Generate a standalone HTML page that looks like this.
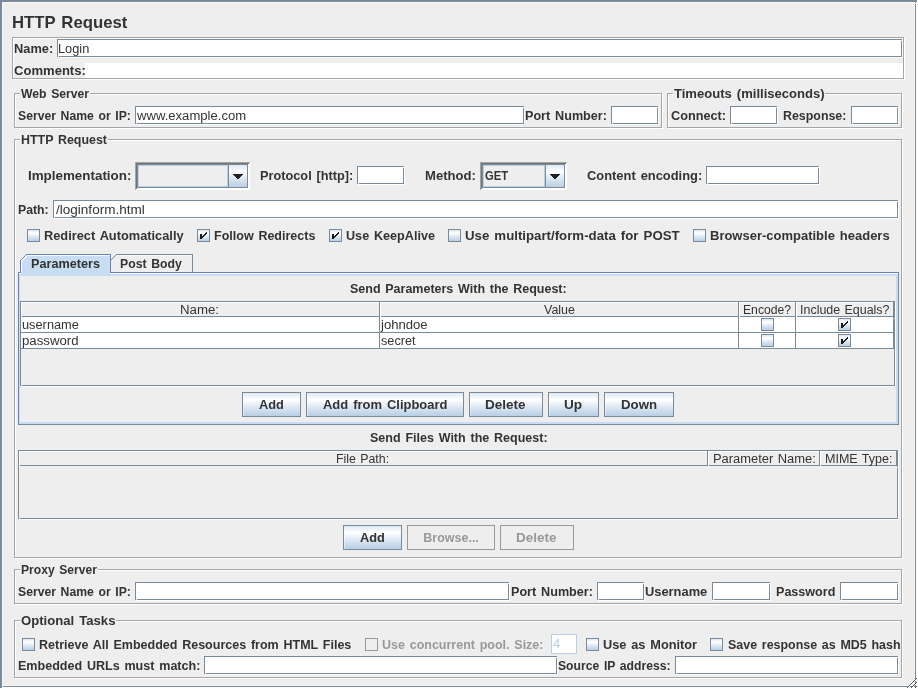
<!DOCTYPE html>
<html><head><meta charset="utf-8"><title>HTTP Request</title>
<style>
html,body{margin:0;padding:0;}
body{width:918px;height:689px;overflow:hidden;background:#EEEEEE;position:relative;font-family:"Liberation Sans",sans-serif;}
#r{position:absolute;left:0;top:0;width:918px;height:689px;overflow:hidden;background:#EEEEEE;}
#t{position:absolute;left:0;top:0;width:918px;height:689px;overflow:hidden;will-change:transform;}
#r div,#r svg,#r span{position:absolute;display:block;}
#r span{white-space:pre;line-height:20px;font-weight:bold;transform-origin:0 50%;}
</style></head><body><div id="r">
<div style="left:916px;top:0px;width:2px;height:689px;background:#FFFFFF;"></div>
<div style="left:0px;top:687px;width:918px;height:2px;background:#FFFFFF;"></div>
<div style="left:0px;top:0px;width:917px;height:2px;background:#7A8A99;"></div>
<div style="left:0px;top:0px;width:2px;height:688px;background:#7A8A99;"></div>
<div style="left:2px;top:2px;width:913px;height:1px;background:#F8F8F7;"></div>
<div style="left:2px;top:2px;width:1px;height:684px;background:#F8F8F7;"></div>
<div style="left:914px;top:3px;width:1px;height:683px;background:#F4F4F4;"></div>
<div style="left:3px;top:685px;width:912px;height:1px;background:#F4F4F4;"></div>
<div style="left:915px;top:4px;width:1px;height:683px;background:#7A8A99;"></div>
<div style="left:915px;top:2px;width:1px;height:1px;background:#7A8A99;"></div>
<div style="left:3px;top:686px;width:913px;height:1px;background:#7A8A99;"></div>
<svg style="left:905px;top:676px" width="13" height="13" viewBox="0 0 13 13" shape-rendering="crispEdges"><rect x="3" y="11" width="1" height="1" fill="#FFFFFF"/><rect x="4" y="10" width="1" height="1" fill="#FFFFFF"/><rect x="5" y="9" width="1" height="1" fill="#FFFFFF"/><rect x="6" y="8" width="1" height="1" fill="#FFFFFF"/><rect x="7" y="7" width="1" height="1" fill="#FFFFFF"/><rect x="8" y="6" width="1" height="1" fill="#FFFFFF"/><rect x="9" y="5" width="1" height="1" fill="#FFFFFF"/><rect x="10" y="4" width="1" height="1" fill="#FFFFFF"/><rect x="11" y="3" width="1" height="1" fill="#FFFFFF"/><rect x="12" y="2" width="1" height="1" fill="#FFFFFF"/><rect x="7" y="11" width="1" height="1" fill="#FFFFFF"/><rect x="8" y="10" width="1" height="1" fill="#FFFFFF"/><rect x="9" y="9" width="1" height="1" fill="#FFFFFF"/><rect x="10" y="8" width="1" height="1" fill="#FFFFFF"/><rect x="11" y="7" width="1" height="1" fill="#FFFFFF"/><rect x="12" y="6" width="1" height="1" fill="#FFFFFF"/><rect x="11" y="11" width="1" height="1" fill="#FFFFFF"/><rect x="12" y="10" width="1" height="1" fill="#FFFFFF"/><rect x="2" y="11" width="1" height="1" fill="#5A5A5A"/><rect x="3" y="10" width="1" height="1" fill="#5A5A5A"/><rect x="4" y="9" width="1" height="1" fill="#5A5A5A"/><rect x="5" y="8" width="1" height="1" fill="#5A5A5A"/><rect x="6" y="7" width="1" height="1" fill="#5A5A5A"/><rect x="7" y="6" width="1" height="1" fill="#5A5A5A"/><rect x="8" y="5" width="1" height="1" fill="#5A5A5A"/><rect x="9" y="4" width="1" height="1" fill="#5A5A5A"/><rect x="10" y="3" width="1" height="1" fill="#5A5A5A"/><rect x="11" y="2" width="1" height="1" fill="#5A5A5A"/><rect x="6" y="11" width="1" height="1" fill="#5A5A5A"/><rect x="7" y="10" width="1" height="1" fill="#5A5A5A"/><rect x="8" y="9" width="1" height="1" fill="#5A5A5A"/><rect x="9" y="8" width="1" height="1" fill="#5A5A5A"/><rect x="10" y="7" width="1" height="1" fill="#5A5A5A"/><rect x="11" y="6" width="1" height="1" fill="#5A5A5A"/><rect x="10" y="11" width="1" height="1" fill="#5A5A5A"/><rect x="11" y="10" width="1" height="1" fill="#5A5A5A"/></svg>
<div style="left:13px;top:38px;width:892px;height:1px;background:#FFFFFF;"></div>
<div style="left:13px;top:79px;width:892px;height:1px;background:#FFFFFF;"></div>
<div style="left:13px;top:38px;width:1px;height:42px;background:#FFFFFF;"></div>
<div style="left:904px;top:38px;width:1px;height:42px;background:#FFFFFF;"></div>
<div style="left:12px;top:37px;width:892px;height:1px;background:#A6A6A6;"></div>
<div style="left:12px;top:78px;width:892px;height:1px;background:#A6A6A6;"></div>
<div style="left:12px;top:37px;width:1px;height:42px;background:#A6A6A6;"></div>
<div style="left:903px;top:37px;width:1px;height:42px;background:#A6A6A6;"></div>
<div style="left:57px;top:39px;width:845px;height:18px;background:#FFFFFF;"></div>
<div style="left:58px;top:57px;width:845px;height:1px;background:#FFFFFF;"></div>
<div style="left:902px;top:40px;width:1px;height:18px;background:#FFFFFF;"></div>
<div style="left:57px;top:39px;width:845px;height:1px;background:#7A8A99;"></div>
<div style="left:57px;top:56px;width:845px;height:1px;background:#7A8A99;"></div>
<div style="left:57px;top:39px;width:1px;height:18px;background:#7A8A99;"></div>
<div style="left:901px;top:39px;width:1px;height:18px;background:#7A8A99;"></div>
<div style="left:58px;top:56px;width:1px;height:1px;background:#F2F2F2;"></div>
<div style="left:901px;top:40px;width:1px;height:1px;background:#F2F2F2;"></div>
<div style="left:85px;top:63px;width:818px;height:15px;background:#FFFFFF;"></div>
<div style="left:15px;top:94px;width:648px;height:1px;background:#FFFFFF;"></div>
<div style="left:15px;top:128px;width:648px;height:1px;background:#FFFFFF;"></div>
<div style="left:15px;top:94px;width:1px;height:35px;background:#FFFFFF;"></div>
<div style="left:662px;top:94px;width:1px;height:35px;background:#FFFFFF;"></div>
<div style="left:14px;top:93px;width:648px;height:1px;background:#A6A6A6;"></div>
<div style="left:14px;top:127px;width:648px;height:1px;background:#A6A6A6;"></div>
<div style="left:14px;top:93px;width:1px;height:35px;background:#A6A6A6;"></div>
<div style="left:661px;top:93px;width:1px;height:35px;background:#A6A6A6;"></div>
<div style="left:20px;top:93px;width:70px;height:2px;background:#EEEEEE;"></div>
<div style="left:135px;top:106px;width:389px;height:18px;background:#FFFFFF;"></div>
<div style="left:136px;top:124px;width:389px;height:1px;background:#FFFFFF;"></div>
<div style="left:524px;top:107px;width:1px;height:18px;background:#FFFFFF;"></div>
<div style="left:135px;top:106px;width:389px;height:1px;background:#7A8A99;"></div>
<div style="left:135px;top:123px;width:389px;height:1px;background:#7A8A99;"></div>
<div style="left:135px;top:106px;width:1px;height:18px;background:#7A8A99;"></div>
<div style="left:523px;top:106px;width:1px;height:18px;background:#7A8A99;"></div>
<div style="left:136px;top:123px;width:1px;height:1px;background:#F2F2F2;"></div>
<div style="left:523px;top:107px;width:1px;height:1px;background:#F2F2F2;"></div>
<div style="left:611px;top:106px;width:47px;height:18px;background:#FFFFFF;"></div>
<div style="left:612px;top:124px;width:47px;height:1px;background:#FFFFFF;"></div>
<div style="left:658px;top:107px;width:1px;height:18px;background:#FFFFFF;"></div>
<div style="left:611px;top:106px;width:47px;height:1px;background:#7A8A99;"></div>
<div style="left:611px;top:123px;width:47px;height:1px;background:#7A8A99;"></div>
<div style="left:611px;top:106px;width:1px;height:18px;background:#7A8A99;"></div>
<div style="left:657px;top:106px;width:1px;height:18px;background:#7A8A99;"></div>
<div style="left:612px;top:123px;width:1px;height:1px;background:#F2F2F2;"></div>
<div style="left:657px;top:107px;width:1px;height:1px;background:#F2F2F2;"></div>
<div style="left:668px;top:94px;width:235px;height:1px;background:#FFFFFF;"></div>
<div style="left:668px;top:128px;width:235px;height:1px;background:#FFFFFF;"></div>
<div style="left:668px;top:94px;width:1px;height:35px;background:#FFFFFF;"></div>
<div style="left:902px;top:94px;width:1px;height:35px;background:#FFFFFF;"></div>
<div style="left:667px;top:93px;width:235px;height:1px;background:#A6A6A6;"></div>
<div style="left:667px;top:127px;width:235px;height:1px;background:#A6A6A6;"></div>
<div style="left:667px;top:93px;width:1px;height:35px;background:#A6A6A6;"></div>
<div style="left:901px;top:93px;width:1px;height:35px;background:#A6A6A6;"></div>
<div style="left:673px;top:93px;width:152px;height:2px;background:#EEEEEE;"></div>
<div style="left:730px;top:106px;width:47px;height:18px;background:#FFFFFF;"></div>
<div style="left:731px;top:124px;width:47px;height:1px;background:#FFFFFF;"></div>
<div style="left:777px;top:107px;width:1px;height:18px;background:#FFFFFF;"></div>
<div style="left:730px;top:106px;width:47px;height:1px;background:#7A8A99;"></div>
<div style="left:730px;top:123px;width:47px;height:1px;background:#7A8A99;"></div>
<div style="left:730px;top:106px;width:1px;height:18px;background:#7A8A99;"></div>
<div style="left:776px;top:106px;width:1px;height:18px;background:#7A8A99;"></div>
<div style="left:731px;top:123px;width:1px;height:1px;background:#F2F2F2;"></div>
<div style="left:776px;top:107px;width:1px;height:1px;background:#F2F2F2;"></div>
<div style="left:851px;top:106px;width:47px;height:18px;background:#FFFFFF;"></div>
<div style="left:852px;top:124px;width:47px;height:1px;background:#FFFFFF;"></div>
<div style="left:898px;top:107px;width:1px;height:18px;background:#FFFFFF;"></div>
<div style="left:851px;top:106px;width:47px;height:1px;background:#7A8A99;"></div>
<div style="left:851px;top:123px;width:47px;height:1px;background:#7A8A99;"></div>
<div style="left:851px;top:106px;width:1px;height:18px;background:#7A8A99;"></div>
<div style="left:897px;top:106px;width:1px;height:18px;background:#7A8A99;"></div>
<div style="left:852px;top:123px;width:1px;height:1px;background:#F2F2F2;"></div>
<div style="left:897px;top:107px;width:1px;height:1px;background:#F2F2F2;"></div>
<div style="left:15px;top:140px;width:888px;height:1px;background:#FFFFFF;"></div>
<div style="left:15px;top:558px;width:888px;height:1px;background:#FFFFFF;"></div>
<div style="left:15px;top:140px;width:1px;height:419px;background:#FFFFFF;"></div>
<div style="left:902px;top:140px;width:1px;height:419px;background:#FFFFFF;"></div>
<div style="left:14px;top:139px;width:888px;height:1px;background:#A6A6A6;"></div>
<div style="left:14px;top:557px;width:888px;height:1px;background:#A6A6A6;"></div>
<div style="left:14px;top:139px;width:1px;height:419px;background:#A6A6A6;"></div>
<div style="left:901px;top:139px;width:1px;height:419px;background:#A6A6A6;"></div>
<div style="left:20px;top:139px;width:88px;height:2px;background:#EEEEEE;"></div>
<div style="left:135px;top:162px;width:115px;height:28px;background:#EEEEEE;"></div>
<div style="left:136px;top:189px;width:114px;height:1px;background:#FFFFFF;"></div>
<div style="left:249px;top:163px;width:1px;height:26px;background:#FFFFFF;"></div>
<div style="left:137px;top:188px;width:112px;height:1px;background:#FFFFFF;"></div>
<div style="left:248px;top:164px;width:1px;height:24px;background:#FFFFFF;"></div>
<div style="left:135px;top:162px;width:1px;height:28px;background:#A6A6A6;"></div>
<div style="left:136px;top:162px;width:114px;height:1px;background:#A6A6A6;"></div>
<div style="left:136px;top:163px;width:1px;height:26px;background:#747474;"></div>
<div style="left:137px;top:163px;width:112px;height:1px;background:#747474;"></div>
<div style="left:137px;top:164px;width:111px;height:1px;background:#7A8A99;"></div>
<div style="left:137px;top:187px;width:111px;height:1px;background:#7A8A99;"></div>
<div style="left:137px;top:164px;width:1px;height:24px;background:#7A8A99;"></div>
<div style="left:247px;top:164px;width:1px;height:24px;background:#7A8A99;"></div>
<div style="left:138px;top:165px;width:90px;height:1px;background:#B8CFE5;"></div>
<div style="left:138px;top:186px;width:90px;height:1px;background:#B8CFE5;"></div>
<div style="left:138px;top:165px;width:1px;height:22px;background:#B8CFE5;"></div>
<div style="left:227px;top:165px;width:1px;height:22px;background:#B8CFE5;"></div>
<div style="left:228px;top:164px;width:20px;height:24px;background:linear-gradient(#DDE8F3 0%,#FFFFFF 30%,#DDE8F3 60%,#B8CFE5 100%);box-sizing:border-box;border:1px solid #7A8A99;"></div>
<svg style="left:233px;top:174px" width="10" height="5" viewBox="0 0 10 5" shape-rendering="crispEdges"><path fill="#222" d="M0 0h10v1h-10zM1 1h8v1h-8zM2 2h6v1h-6zM3 3h4v1h-4zM4 4h2v1h-2z"/></svg>
<div style="left:357px;top:166px;width:47px;height:18px;background:#FFFFFF;"></div>
<div style="left:358px;top:184px;width:47px;height:1px;background:#FFFFFF;"></div>
<div style="left:404px;top:167px;width:1px;height:18px;background:#FFFFFF;"></div>
<div style="left:357px;top:166px;width:47px;height:1px;background:#7A8A99;"></div>
<div style="left:357px;top:183px;width:47px;height:1px;background:#7A8A99;"></div>
<div style="left:357px;top:166px;width:1px;height:18px;background:#7A8A99;"></div>
<div style="left:403px;top:166px;width:1px;height:18px;background:#7A8A99;"></div>
<div style="left:358px;top:183px;width:1px;height:1px;background:#F2F2F2;"></div>
<div style="left:403px;top:167px;width:1px;height:1px;background:#F2F2F2;"></div>
<div style="left:480px;top:162px;width:87px;height:28px;background:#EEEEEE;"></div>
<div style="left:481px;top:189px;width:86px;height:1px;background:#FFFFFF;"></div>
<div style="left:566px;top:163px;width:1px;height:26px;background:#FFFFFF;"></div>
<div style="left:482px;top:188px;width:84px;height:1px;background:#FFFFFF;"></div>
<div style="left:565px;top:164px;width:1px;height:24px;background:#FFFFFF;"></div>
<div style="left:480px;top:162px;width:1px;height:28px;background:#A6A6A6;"></div>
<div style="left:481px;top:162px;width:86px;height:1px;background:#A6A6A6;"></div>
<div style="left:481px;top:163px;width:1px;height:26px;background:#747474;"></div>
<div style="left:482px;top:163px;width:84px;height:1px;background:#747474;"></div>
<div style="left:482px;top:164px;width:83px;height:1px;background:#7A8A99;"></div>
<div style="left:482px;top:187px;width:83px;height:1px;background:#7A8A99;"></div>
<div style="left:482px;top:164px;width:1px;height:24px;background:#7A8A99;"></div>
<div style="left:564px;top:164px;width:1px;height:24px;background:#7A8A99;"></div>
<div style="left:483px;top:165px;width:62px;height:1px;background:#B8CFE5;"></div>
<div style="left:483px;top:186px;width:62px;height:1px;background:#B8CFE5;"></div>
<div style="left:483px;top:165px;width:1px;height:22px;background:#B8CFE5;"></div>
<div style="left:544px;top:165px;width:1px;height:22px;background:#B8CFE5;"></div>
<div style="left:545px;top:164px;width:20px;height:24px;background:linear-gradient(#DDE8F3 0%,#FFFFFF 30%,#DDE8F3 60%,#B8CFE5 100%);box-sizing:border-box;border:1px solid #7A8A99;"></div>
<svg style="left:550px;top:174px" width="10" height="5" viewBox="0 0 10 5" shape-rendering="crispEdges"><path fill="#222" d="M0 0h10v1h-10zM1 1h8v1h-8zM2 2h6v1h-6zM3 3h4v1h-4zM4 4h2v1h-2z"/></svg>
<div style="left:706px;top:166px;width:113px;height:18px;background:#FFFFFF;"></div>
<div style="left:707px;top:184px;width:113px;height:1px;background:#FFFFFF;"></div>
<div style="left:819px;top:167px;width:1px;height:18px;background:#FFFFFF;"></div>
<div style="left:706px;top:166px;width:113px;height:1px;background:#7A8A99;"></div>
<div style="left:706px;top:183px;width:113px;height:1px;background:#7A8A99;"></div>
<div style="left:706px;top:166px;width:1px;height:18px;background:#7A8A99;"></div>
<div style="left:818px;top:166px;width:1px;height:18px;background:#7A8A99;"></div>
<div style="left:707px;top:183px;width:1px;height:1px;background:#F2F2F2;"></div>
<div style="left:818px;top:167px;width:1px;height:1px;background:#F2F2F2;"></div>
<div style="left:53px;top:200px;width:845px;height:18px;background:#FFFFFF;"></div>
<div style="left:54px;top:218px;width:845px;height:1px;background:#FFFFFF;"></div>
<div style="left:898px;top:201px;width:1px;height:18px;background:#FFFFFF;"></div>
<div style="left:53px;top:200px;width:845px;height:1px;background:#7A8A99;"></div>
<div style="left:53px;top:217px;width:845px;height:1px;background:#7A8A99;"></div>
<div style="left:53px;top:200px;width:1px;height:18px;background:#7A8A99;"></div>
<div style="left:897px;top:200px;width:1px;height:18px;background:#7A8A99;"></div>
<div style="left:54px;top:217px;width:1px;height:1px;background:#F2F2F2;"></div>
<div style="left:897px;top:201px;width:1px;height:1px;background:#F2F2F2;"></div>
<div style="left:27px;top:229px;width:13px;height:13px;background:linear-gradient(#DDE8F3 0%,#FFFFFF 30%,#DDE8F3 60%,#B8CFE5 100%);box-sizing:border-box;border:1px solid #7A8A99;"></div>
<div style="left:197px;top:229px;width:13px;height:13px;background:linear-gradient(#DDE8F3 0%,#FFFFFF 30%,#DDE8F3 60%,#B8CFE5 100%);box-sizing:border-box;border:1px solid #7A8A99;"></div>
<svg style="left:197px;top:229px" width="13" height="13" viewBox="0 0 13 13" shape-rendering="crispEdges"><path fill="#1a1a1a" d="M3 5h2v5h-2z"/><path fill="#1a1a1a" d="M9 3h1v2h-1zM8 4h1v2h-1zM7 5h1v2h-1zM6 6h1v2h-1zM5 7h1v2h-1z"/></svg>
<div style="left:329px;top:229px;width:13px;height:13px;background:linear-gradient(#DDE8F3 0%,#FFFFFF 30%,#DDE8F3 60%,#B8CFE5 100%);box-sizing:border-box;border:1px solid #7A8A99;"></div>
<svg style="left:329px;top:229px" width="13" height="13" viewBox="0 0 13 13" shape-rendering="crispEdges"><path fill="#1a1a1a" d="M3 5h2v5h-2z"/><path fill="#1a1a1a" d="M9 3h1v2h-1zM8 4h1v2h-1zM7 5h1v2h-1zM6 6h1v2h-1zM5 7h1v2h-1z"/></svg>
<div style="left:448px;top:229px;width:13px;height:13px;background:linear-gradient(#DDE8F3 0%,#FFFFFF 30%,#DDE8F3 60%,#B8CFE5 100%);box-sizing:border-box;border:1px solid #7A8A99;"></div>
<div style="left:693px;top:229px;width:13px;height:13px;background:linear-gradient(#DDE8F3 0%,#FFFFFF 30%,#DDE8F3 60%,#B8CFE5 100%);box-sizing:border-box;border:1px solid #7A8A99;"></div>
<div style="left:18px;top:272px;width:1px;height:153px;background:#6382BF;"></div>
<div style="left:19px;top:273px;width:1px;height:151px;background:#C8DDF2;"></div>
<div style="left:18px;top:272px;width:881px;height:1px;background:#6382BF;"></div>
<div style="left:19px;top:273px;width:879px;height:1px;background:#FFFFFF;"></div>
<div style="left:19px;top:274px;width:879px;height:2px;background:#C8DDF2;"></div>
<div style="left:898px;top:273px;width:1px;height:152px;background:#7A8A99;"></div>
<div style="left:896px;top:274px;width:2px;height:150px;background:#C8DDF2;"></div>
<div style="left:18px;top:424px;width:881px;height:1px;background:#7A8A99;"></div>
<div style="left:19px;top:422px;width:879px;height:2px;background:#C8DDF2;"></div>
<svg style="left:20px;top:254px" width="175" height="22" viewBox="0 0 175 22" shape-rendering="crispEdges"><path d="M1 22V7L7 1H90V22z" fill="#C8DDF2"/><rect x="1" y="7" width="1" height="12" fill="#FFFFFF"/><rect x="7" y="1" width="83" height="1" fill="#FFFFFF"/><rect x="2" y="6" width="1" height="1" fill="#FFFFFF"/><rect x="3" y="5" width="1" height="1" fill="#FFFFFF"/><rect x="4" y="4" width="1" height="1" fill="#FFFFFF"/><rect x="5" y="3" width="1" height="1" fill="#FFFFFF"/><rect x="6" y="2" width="1" height="1" fill="#FFFFFF"/><rect x="0" y="6" width="1" height="13" fill="#6382BF"/><rect x="1" y="5" width="1" height="1" fill="#6382BF"/><rect x="2" y="4" width="1" height="1" fill="#6382BF"/><rect x="3" y="3" width="1" height="1" fill="#6382BF"/><rect x="4" y="2" width="1" height="1" fill="#6382BF"/><rect x="5" y="1" width="1" height="1" fill="#6382BF"/><rect x="6" y="0" width="85" height="1" fill="#6382BF"/><rect x="90" y="0" width="1" height="19" fill="#6382BF"/><rect x="1" y="18" width="89" height="4" fill="#C8DDF2"/><rect x="91" y="5" width="1" height="1" fill="#7A8A99"/><rect x="92" y="4" width="1" height="1" fill="#7A8A99"/><rect x="93" y="3" width="1" height="1" fill="#7A8A99"/><rect x="94" y="2" width="1" height="1" fill="#7A8A99"/><rect x="95" y="1" width="1" height="1" fill="#7A8A99"/><rect x="96" y="0" width="77" height="1" fill="#7A8A99"/><rect x="172" y="0" width="1" height="18" fill="#7A8A99"/><rect x="97" y="1" width="75" height="1" fill="#F8F8F8"/></svg>
<div style="left:895px;top:302px;width:1px;height:85px;background:#FFFFFF;"></div>
<div style="left:21px;top:386px;width:875px;height:1px;background:#FFFFFF;"></div>
<div style="left:20px;top:301px;width:875px;height:1px;background:#7A8A99;"></div>
<div style="left:20px;top:385px;width:875px;height:1px;background:#7A8A99;"></div>
<div style="left:20px;top:301px;width:1px;height:85px;background:#7A8A99;"></div>
<div style="left:894px;top:301px;width:1px;height:85px;background:#7A8A99;"></div>
<div style="left:21px;top:385px;width:1px;height:1px;background:#EEEEEE;"></div>
<div style="left:894px;top:318px;width:1px;height:1px;background:#EEEEEE;"></div>
<div style="left:21px;top:317px;width:873px;height:32px;background:#FFFFFF;"></div>
<div style="left:21px;top:302px;width:873px;height:1px;background:#FFFFFF;"></div>
<div style="left:22px;top:316px;width:872px;height:1px;background:#7A8A99;"></div>
<div style="left:21px;top:332px;width:873px;height:1px;background:#7A8A99;"></div>
<div style="left:21px;top:348px;width:873px;height:1px;background:#7A8A99;"></div>
<div style="left:379px;top:302px;width:1px;height:47px;background:#7A8A99;"></div>
<div style="left:738px;top:302px;width:1px;height:47px;background:#7A8A99;"></div>
<div style="left:795px;top:302px;width:1px;height:47px;background:#7A8A99;"></div>
<div style="left:21px;top:302px;width:1px;height:15px;background:#FFFFFF;"></div>
<div style="left:380px;top:302px;width:1px;height:15px;background:#FFFFFF;"></div>
<div style="left:739px;top:302px;width:1px;height:15px;background:#FFFFFF;"></div>
<div style="left:796px;top:302px;width:1px;height:15px;background:#FFFFFF;"></div>
<div style="left:893px;top:302px;width:1px;height:47px;background:#7A8A99;"></div>
<div style="left:761px;top:318px;width:13px;height:13px;background:linear-gradient(#DDE8F3 0%,#FFFFFF 30%,#DDE8F3 60%,#B8CFE5 100%);box-sizing:border-box;border:1px solid #7A8A99;"></div>
<div style="left:838px;top:318px;width:13px;height:13px;background:linear-gradient(#DDE8F3 0%,#FFFFFF 30%,#DDE8F3 60%,#B8CFE5 100%);box-sizing:border-box;border:1px solid #7A8A99;"></div>
<svg style="left:838px;top:318px" width="13" height="13" viewBox="0 0 13 13" shape-rendering="crispEdges"><path fill="#1a1a1a" d="M3 5h2v5h-2z"/><path fill="#1a1a1a" d="M9 3h1v2h-1zM8 4h1v2h-1zM7 5h1v2h-1zM6 6h1v2h-1zM5 7h1v2h-1z"/></svg>
<div style="left:761px;top:334px;width:13px;height:13px;background:linear-gradient(#DDE8F3 0%,#FFFFFF 30%,#DDE8F3 60%,#B8CFE5 100%);box-sizing:border-box;border:1px solid #7A8A99;"></div>
<div style="left:838px;top:334px;width:13px;height:13px;background:linear-gradient(#DDE8F3 0%,#FFFFFF 30%,#DDE8F3 60%,#B8CFE5 100%);box-sizing:border-box;border:1px solid #7A8A99;"></div>
<svg style="left:838px;top:334px" width="13" height="13" viewBox="0 0 13 13" shape-rendering="crispEdges"><path fill="#1a1a1a" d="M3 5h2v5h-2z"/><path fill="#1a1a1a" d="M9 3h1v2h-1zM8 4h1v2h-1zM7 5h1v2h-1zM6 6h1v2h-1zM5 7h1v2h-1z"/></svg>
<div style="left:242px;top:392px;width:59px;height:25px;background:linear-gradient(#DDE8F3 0%,#FFFFFF 30%,#DDE8F3 60%,#B8CFE5 100%);box-sizing:border-box;border:1px solid #7A8A99;"></div>
<div style="left:243px;top:393px;width:1px;height:23px;background:rgba(255,255,255,0.4);"></div>
<div style="left:306px;top:392px;width:158px;height:25px;background:linear-gradient(#DDE8F3 0%,#FFFFFF 30%,#DDE8F3 60%,#B8CFE5 100%);box-sizing:border-box;border:1px solid #7A8A99;"></div>
<div style="left:307px;top:393px;width:1px;height:23px;background:rgba(255,255,255,0.4);"></div>
<div style="left:469px;top:392px;width:74px;height:25px;background:linear-gradient(#DDE8F3 0%,#FFFFFF 30%,#DDE8F3 60%,#B8CFE5 100%);box-sizing:border-box;border:1px solid #7A8A99;"></div>
<div style="left:470px;top:393px;width:1px;height:23px;background:rgba(255,255,255,0.4);"></div>
<div style="left:548px;top:392px;width:51px;height:25px;background:linear-gradient(#DDE8F3 0%,#FFFFFF 30%,#DDE8F3 60%,#B8CFE5 100%);box-sizing:border-box;border:1px solid #7A8A99;"></div>
<div style="left:549px;top:393px;width:1px;height:23px;background:rgba(255,255,255,0.4);"></div>
<div style="left:604px;top:392px;width:70px;height:25px;background:linear-gradient(#DDE8F3 0%,#FFFFFF 30%,#DDE8F3 60%,#B8CFE5 100%);box-sizing:border-box;border:1px solid #7A8A99;"></div>
<div style="left:605px;top:393px;width:1px;height:23px;background:rgba(255,255,255,0.4);"></div>
<div style="left:898px;top:451px;width:1px;height:69px;background:#FFFFFF;"></div>
<div style="left:19px;top:519px;width:880px;height:1px;background:#FFFFFF;"></div>
<div style="left:18px;top:450px;width:880px;height:1px;background:#7A8A99;"></div>
<div style="left:18px;top:518px;width:880px;height:1px;background:#7A8A99;"></div>
<div style="left:18px;top:450px;width:1px;height:69px;background:#7A8A99;"></div>
<div style="left:897px;top:450px;width:1px;height:69px;background:#7A8A99;"></div>
<div style="left:19px;top:518px;width:1px;height:1px;background:#EEEEEE;"></div>
<div style="left:897px;top:467px;width:1px;height:1px;background:#EEEEEE;"></div>
<div style="left:19px;top:451px;width:878px;height:1px;background:#FFFFFF;"></div>
<div style="left:20px;top:465px;width:877px;height:1px;background:#7A8A99;"></div>
<div style="left:707px;top:451px;width:1px;height:15px;background:#7A8A99;"></div>
<div style="left:819px;top:451px;width:1px;height:15px;background:#7A8A99;"></div>
<div style="left:896px;top:451px;width:1px;height:15px;background:#7A8A99;"></div>
<div style="left:19px;top:451px;width:1px;height:15px;background:#FFFFFF;"></div>
<div style="left:708px;top:451px;width:1px;height:15px;background:#FFFFFF;"></div>
<div style="left:820px;top:451px;width:1px;height:15px;background:#FFFFFF;"></div>
<div style="left:343px;top:525px;width:59px;height:25px;background:linear-gradient(#DDE8F3 0%,#FFFFFF 30%,#DDE8F3 60%,#B8CFE5 100%);box-sizing:border-box;border:1px solid #7A8A99;"></div>
<div style="left:344px;top:526px;width:1px;height:23px;background:rgba(255,255,255,0.4);"></div>
<div style="left:407px;top:525px;width:88px;height:25px;background:#EEEEEE;box-sizing:border-box;border:1px solid #999999;"></div>
<div style="left:500px;top:525px;width:74px;height:25px;background:#EEEEEE;box-sizing:border-box;border:1px solid #999999;"></div>
<div style="left:15px;top:570px;width:888px;height:1px;background:#FFFFFF;"></div>
<div style="left:15px;top:604px;width:888px;height:1px;background:#FFFFFF;"></div>
<div style="left:15px;top:570px;width:1px;height:35px;background:#FFFFFF;"></div>
<div style="left:902px;top:570px;width:1px;height:35px;background:#FFFFFF;"></div>
<div style="left:14px;top:569px;width:888px;height:1px;background:#A6A6A6;"></div>
<div style="left:14px;top:603px;width:888px;height:1px;background:#A6A6A6;"></div>
<div style="left:14px;top:569px;width:1px;height:35px;background:#A6A6A6;"></div>
<div style="left:901px;top:569px;width:1px;height:35px;background:#A6A6A6;"></div>
<div style="left:20px;top:569px;width:78px;height:2px;background:#EEEEEE;"></div>
<div style="left:135px;top:582px;width:374px;height:18px;background:#FFFFFF;"></div>
<div style="left:136px;top:600px;width:374px;height:1px;background:#FFFFFF;"></div>
<div style="left:509px;top:583px;width:1px;height:18px;background:#FFFFFF;"></div>
<div style="left:135px;top:582px;width:374px;height:1px;background:#7A8A99;"></div>
<div style="left:135px;top:599px;width:374px;height:1px;background:#7A8A99;"></div>
<div style="left:135px;top:582px;width:1px;height:18px;background:#7A8A99;"></div>
<div style="left:508px;top:582px;width:1px;height:18px;background:#7A8A99;"></div>
<div style="left:136px;top:599px;width:1px;height:1px;background:#F2F2F2;"></div>
<div style="left:508px;top:583px;width:1px;height:1px;background:#F2F2F2;"></div>
<div style="left:597px;top:582px;width:47px;height:18px;background:#FFFFFF;"></div>
<div style="left:598px;top:600px;width:47px;height:1px;background:#FFFFFF;"></div>
<div style="left:644px;top:583px;width:1px;height:18px;background:#FFFFFF;"></div>
<div style="left:597px;top:582px;width:47px;height:1px;background:#7A8A99;"></div>
<div style="left:597px;top:599px;width:47px;height:1px;background:#7A8A99;"></div>
<div style="left:597px;top:582px;width:1px;height:18px;background:#7A8A99;"></div>
<div style="left:643px;top:582px;width:1px;height:18px;background:#7A8A99;"></div>
<div style="left:598px;top:599px;width:1px;height:1px;background:#F2F2F2;"></div>
<div style="left:643px;top:583px;width:1px;height:1px;background:#F2F2F2;"></div>
<div style="left:712px;top:582px;width:58px;height:18px;background:#FFFFFF;"></div>
<div style="left:713px;top:600px;width:58px;height:1px;background:#FFFFFF;"></div>
<div style="left:770px;top:583px;width:1px;height:18px;background:#FFFFFF;"></div>
<div style="left:712px;top:582px;width:58px;height:1px;background:#7A8A99;"></div>
<div style="left:712px;top:599px;width:58px;height:1px;background:#7A8A99;"></div>
<div style="left:712px;top:582px;width:1px;height:18px;background:#7A8A99;"></div>
<div style="left:769px;top:582px;width:1px;height:18px;background:#7A8A99;"></div>
<div style="left:713px;top:599px;width:1px;height:1px;background:#F2F2F2;"></div>
<div style="left:769px;top:583px;width:1px;height:1px;background:#F2F2F2;"></div>
<div style="left:840px;top:582px;width:58px;height:18px;background:#FFFFFF;"></div>
<div style="left:841px;top:600px;width:58px;height:1px;background:#FFFFFF;"></div>
<div style="left:898px;top:583px;width:1px;height:18px;background:#FFFFFF;"></div>
<div style="left:840px;top:582px;width:58px;height:1px;background:#7A8A99;"></div>
<div style="left:840px;top:599px;width:58px;height:1px;background:#7A8A99;"></div>
<div style="left:840px;top:582px;width:1px;height:18px;background:#7A8A99;"></div>
<div style="left:897px;top:582px;width:1px;height:18px;background:#7A8A99;"></div>
<div style="left:841px;top:599px;width:1px;height:1px;background:#F2F2F2;"></div>
<div style="left:897px;top:583px;width:1px;height:1px;background:#F2F2F2;"></div>
<div style="left:15px;top:621px;width:888px;height:1px;background:#FFFFFF;"></div>
<div style="left:15px;top:678px;width:888px;height:1px;background:#FFFFFF;"></div>
<div style="left:15px;top:621px;width:1px;height:58px;background:#FFFFFF;"></div>
<div style="left:902px;top:621px;width:1px;height:58px;background:#FFFFFF;"></div>
<div style="left:14px;top:620px;width:888px;height:1px;background:#A6A6A6;"></div>
<div style="left:14px;top:677px;width:888px;height:1px;background:#A6A6A6;"></div>
<div style="left:14px;top:620px;width:1px;height:58px;background:#A6A6A6;"></div>
<div style="left:901px;top:620px;width:1px;height:58px;background:#A6A6A6;"></div>
<div style="left:20px;top:620px;width:96px;height:2px;background:#EEEEEE;"></div>
<div style="left:22px;top:638px;width:13px;height:13px;background:linear-gradient(#DDE8F3 0%,#FFFFFF 30%,#DDE8F3 60%,#B8CFE5 100%);box-sizing:border-box;border:1px solid #7A8A99;"></div>
<div style="left:365px;top:638px;width:13px;height:13px;background:#EEEEEE;box-sizing:border-box;border:1px solid #999999;"></div>
<div style="left:551px;top:634px;width:26px;height:20px;background:#FFFFFF;box-sizing:border-box;border:1px solid #B8CFE5;"></div>
<div style="left:586px;top:638px;width:13px;height:13px;background:linear-gradient(#DDE8F3 0%,#FFFFFF 30%,#DDE8F3 60%,#B8CFE5 100%);box-sizing:border-box;border:1px solid #7A8A99;"></div>
<div style="left:710px;top:638px;width:13px;height:13px;background:linear-gradient(#DDE8F3 0%,#FFFFFF 30%,#DDE8F3 60%,#B8CFE5 100%);box-sizing:border-box;border:1px solid #7A8A99;"></div>
<div style="left:204px;top:656px;width:353px;height:18px;background:#FFFFFF;"></div>
<div style="left:205px;top:674px;width:353px;height:1px;background:#FFFFFF;"></div>
<div style="left:557px;top:657px;width:1px;height:18px;background:#FFFFFF;"></div>
<div style="left:204px;top:656px;width:353px;height:1px;background:#7A8A99;"></div>
<div style="left:204px;top:673px;width:353px;height:1px;background:#7A8A99;"></div>
<div style="left:204px;top:656px;width:1px;height:18px;background:#7A8A99;"></div>
<div style="left:556px;top:656px;width:1px;height:18px;background:#7A8A99;"></div>
<div style="left:205px;top:673px;width:1px;height:1px;background:#F2F2F2;"></div>
<div style="left:556px;top:657px;width:1px;height:1px;background:#F2F2F2;"></div>
<div style="left:675px;top:656px;width:223px;height:18px;background:#FFFFFF;"></div>
<div style="left:676px;top:674px;width:223px;height:1px;background:#FFFFFF;"></div>
<div style="left:898px;top:657px;width:1px;height:18px;background:#FFFFFF;"></div>
<div style="left:675px;top:656px;width:223px;height:1px;background:#7A8A99;"></div>
<div style="left:675px;top:673px;width:223px;height:1px;background:#7A8A99;"></div>
<div style="left:675px;top:656px;width:1px;height:18px;background:#7A8A99;"></div>
<div style="left:897px;top:656px;width:1px;height:18px;background:#7A8A99;"></div>
<div style="left:676px;top:673px;width:1px;height:1px;background:#F2F2F2;"></div>
<div style="left:897px;top:657px;width:1px;height:1px;background:#F2F2F2;"></div>
<div id="t">
<span style="left:12.17px;top:12.00px;font-size:16.3px;word-spacing:1.3px;color:#333333;transform:scaleX(1.0270)">HTTP Request</span>
<span style="left:13.98px;top:39.00px;font-size:12.5px;color:#333333;transform:scaleX(1.0248)">Name:</span>
<span style="left:58.38px;top:39.00px;font-size:12.5px;font-weight:normal;color:#333333;transform:scaleX(1.0226)">Login</span>
<span style="left:14.23px;top:61.00px;font-size:12.5px;color:#333333;transform:scaleX(1.0448)">Comments:</span>
<span style="left:21.00px;top:84.00px;font-size:12.5px;word-spacing:1.3px;color:#333333;transform:scaleX(0.9749)">Web Server</span>
<span style="left:17.91px;top:106.00px;font-size:12.5px;word-spacing:1.3px;color:#333333;transform:scaleX(0.9754)">Server Name or IP:</span>
<span style="left:137.10px;top:106.00px;font-size:12.5px;font-weight:normal;color:#333333;transform:scaleX(1.0473)">www.example.com</span>
<span style="left:524.74px;top:106.00px;font-size:12.5px;word-spacing:1.3px;color:#333333;transform:scaleX(1.0095)">Port Number:</span>
<span style="left:674.04px;top:84.00px;font-size:12.5px;word-spacing:1.3px;color:#333333;transform:scaleX(1.0450)">Timeouts (milliseconds)</span>
<span style="left:670.79px;top:106.00px;font-size:12.5px;color:#333333;transform:scaleX(1.0171)">Connect:</span>
<span style="left:782.96px;top:106.00px;font-size:12.5px;color:#333333;transform:scaleX(0.9919)">Response:</span>
<span style="left:21.25px;top:130.00px;font-size:12.5px;word-spacing:1.3px;color:#333333;transform:scaleX(0.9942)">HTTP Request</span>
<span style="left:27.60px;top:166.00px;font-size:12.5px;color:#333333;transform:scaleX(1.0709)">Implementation:</span>
<span style="left:259.74px;top:166.00px;font-size:12.5px;word-spacing:1.3px;color:#333333;transform:scaleX(1.0196)">Protocol [http]:</span>
<span style="left:425.01px;top:166.00px;font-size:12.5px;color:#333333;transform:scaleX(1.0481)">Method:</span>
<span style="left:485.15px;top:166.00px;font-size:12.5px;color:#333333;transform:scaleX(0.8960)">GET</span>
<span style="left:586.98px;top:166.00px;font-size:12.5px;word-spacing:1.3px;color:#333333;transform:scaleX(1.0318)">Content encoding:</span>
<span style="left:18.01px;top:200.00px;font-size:12.5px;color:#333333;transform:scaleX(0.9829)">Path:</span>
<span style="left:55.70px;top:200.00px;font-size:12.5px;font-weight:normal;color:#333333;transform:scaleX(1.0831)">/loginform.html</span>
<span style="left:44.03px;top:226.00px;font-size:12.5px;word-spacing:1.3px;color:#333333;transform:scaleX(1.0240)">Redirect Automatically</span>
<span style="left:214.05px;top:226.00px;font-size:12.5px;word-spacing:1.3px;color:#333333;transform:scaleX(1.0000)">Follow Redirects</span>
<span style="left:345.84px;top:226.00px;font-size:12.5px;word-spacing:1.3px;color:#333333;transform:scaleX(1.0092)">Use KeepAlive</span>
<span style="left:464.81px;top:226.00px;font-size:12.5px;word-spacing:1.3px;color:#333333;transform:scaleX(1.0596)">Use multipart/form-data for POST</span>
<span style="left:709.82px;top:226.00px;font-size:12.5px;word-spacing:1.3px;color:#333333;transform:scaleX(1.0391)">Browser-compatible headers</span>
<span style="left:30.84px;top:254.00px;font-size:12.5px;color:#333333;transform:scaleX(1.0127)">Parameters</span>
<span style="left:120.07px;top:254.00px;font-size:12.5px;word-spacing:1.3px;color:#333333;transform:scaleX(0.9799)">Post Body</span>
<span style="left:350.00px;top:279.00px;font-size:12.5px;word-spacing:1.3px;color:#333333;transform:scaleX(0.9988)">Send Parameters With the Request:</span>
<span style="left:180.14px;top:300.00px;font-size:12.5px;font-weight:normal;color:#333333;transform:scaleX(1.0590)">Name:</span>
<span style="left:543.65px;top:300.00px;font-size:12.5px;font-weight:normal;color:#333333;transform:scaleX(0.9983)">Value</span>
<span style="left:743.03px;top:300.00px;font-size:12.5px;font-weight:normal;color:#333333;transform:scaleX(0.9738)">Encode?</span>
<span style="left:799.75px;top:300.00px;font-size:12.5px;font-weight:normal;word-spacing:0.8px;color:#333333;transform:scaleX(0.9972)">Include Equals?</span>
<span style="left:21.73px;top:315.00px;font-size:12.5px;font-weight:normal;color:#333333;transform:scaleX(1.0230)">username</span>
<span style="left:380.86px;top:315.00px;font-size:12.5px;font-weight:normal;color:#333333;transform:scaleX(1.0486)">johndoe</span>
<span style="left:21.71px;top:331.00px;font-size:12.5px;font-weight:normal;color:#333333;transform:scaleX(1.0577)">password</span>
<span style="left:381.29px;top:331.00px;font-size:12.5px;font-weight:normal;color:#333333;transform:scaleX(1.0149)">secret</span>
<span style="left:259.24px;top:395.00px;font-size:12.5px;color:#333333;transform:scaleX(1.0237)">Add</span>
<span style="left:323.04px;top:395.00px;font-size:12.5px;word-spacing:1.3px;color:#333333;transform:scaleX(1.0375)">Add from Clipboard</span>
<span style="left:485.49px;top:395.00px;font-size:12.5px;color:#333333;transform:scaleX(1.0814)">Delete</span>
<span style="left:564.48px;top:395.00px;font-size:12.5px;color:#333333;transform:scaleX(1.0885)">Up</span>
<span style="left:621.21px;top:395.00px;font-size:12.5px;color:#333333;transform:scaleX(1.0585)">Down</span>
<span style="left:370.00px;top:428.00px;font-size:12.5px;word-spacing:1.3px;color:#333333;transform:scaleX(1.0014)">Send Files With the Request:</span>
<span style="left:336.01px;top:449.00px;font-size:12.5px;font-weight:normal;word-spacing:0.8px;color:#333333;transform:scaleX(0.9903)">File Path:</span>
<span style="left:712.67px;top:449.00px;font-size:12.5px;font-weight:normal;word-spacing:0.8px;color:#333333;transform:scaleX(1.0344)">Parameter Name:</span>
<span style="left:824.60px;top:449.00px;font-size:12.5px;font-weight:normal;word-spacing:0.8px;color:#333333;transform:scaleX(1.0023)">MIME Type:</span>
<span style="left:360.24px;top:528.00px;font-size:12.5px;color:#333333;transform:scaleX(1.0237)">Add</span>
<span style="left:423.25px;top:528.00px;font-size:12.5px;color:#999999;transform:scaleX(1.0000)">Browse...</span>
<span style="left:516.49px;top:528.00px;font-size:12.5px;color:#999999;transform:scaleX(1.0814)">Delete</span>
<span style="left:21.27px;top:560.00px;font-size:12.5px;word-spacing:1.3px;color:#333333;transform:scaleX(0.9677)">Proxy Server</span>
<span style="left:17.91px;top:582.00px;font-size:12.5px;word-spacing:1.3px;color:#333333;transform:scaleX(0.9754)">Server Name or IP:</span>
<span style="left:511.24px;top:582.00px;font-size:12.5px;word-spacing:1.3px;color:#333333;transform:scaleX(1.0095)">Port Number:</span>
<span style="left:644.83px;top:582.00px;font-size:12.5px;color:#333333;transform:scaleX(1.0295)">Username</span>
<span style="left:775.95px;top:582.00px;font-size:12.5px;color:#333333;transform:scaleX(1.0052)">Password</span>
<span style="left:21.08px;top:611.00px;font-size:12.5px;word-spacing:1.3px;color:#333333;transform:scaleX(1.0494)">Optional Tasks</span>
<span style="left:39.05px;top:635.00px;font-size:12.5px;word-spacing:1.3px;color:#333333;transform:scaleX(1.0008)">Retrieve All Embedded Resources from HTML Files</span>
<span style="left:382.05px;top:635.00px;font-size:12.5px;word-spacing:1.3px;color:#999999;transform:scaleX(0.9994)">Use concurrent pool. Size:</span>
<span style="left:553.14px;top:634.00px;font-size:12.5px;font-weight:normal;color:#B8CFE5;transform:scaleX(1.0560)">4</span>
<span style="left:603.24px;top:635.00px;font-size:12.5px;word-spacing:1.3px;color:#333333;transform:scaleX(1.0192)">Use as Monitor</span>
<span style="left:727.70px;top:635.00px;font-size:12.5px;word-spacing:1.3px;color:#333333;transform:scaleX(0.9953)">Save response as MD5 hash</span>
<span style="left:18.00px;top:656.00px;font-size:12.5px;word-spacing:1.3px;color:#333333;transform:scaleX(1.0036)">Embedded URLs must match:</span>
<span style="left:558.31px;top:656.00px;font-size:12.5px;word-spacing:1.3px;color:#333333;transform:scaleX(0.9737)">Source IP address:</span>
</div>
</div></body></html>
